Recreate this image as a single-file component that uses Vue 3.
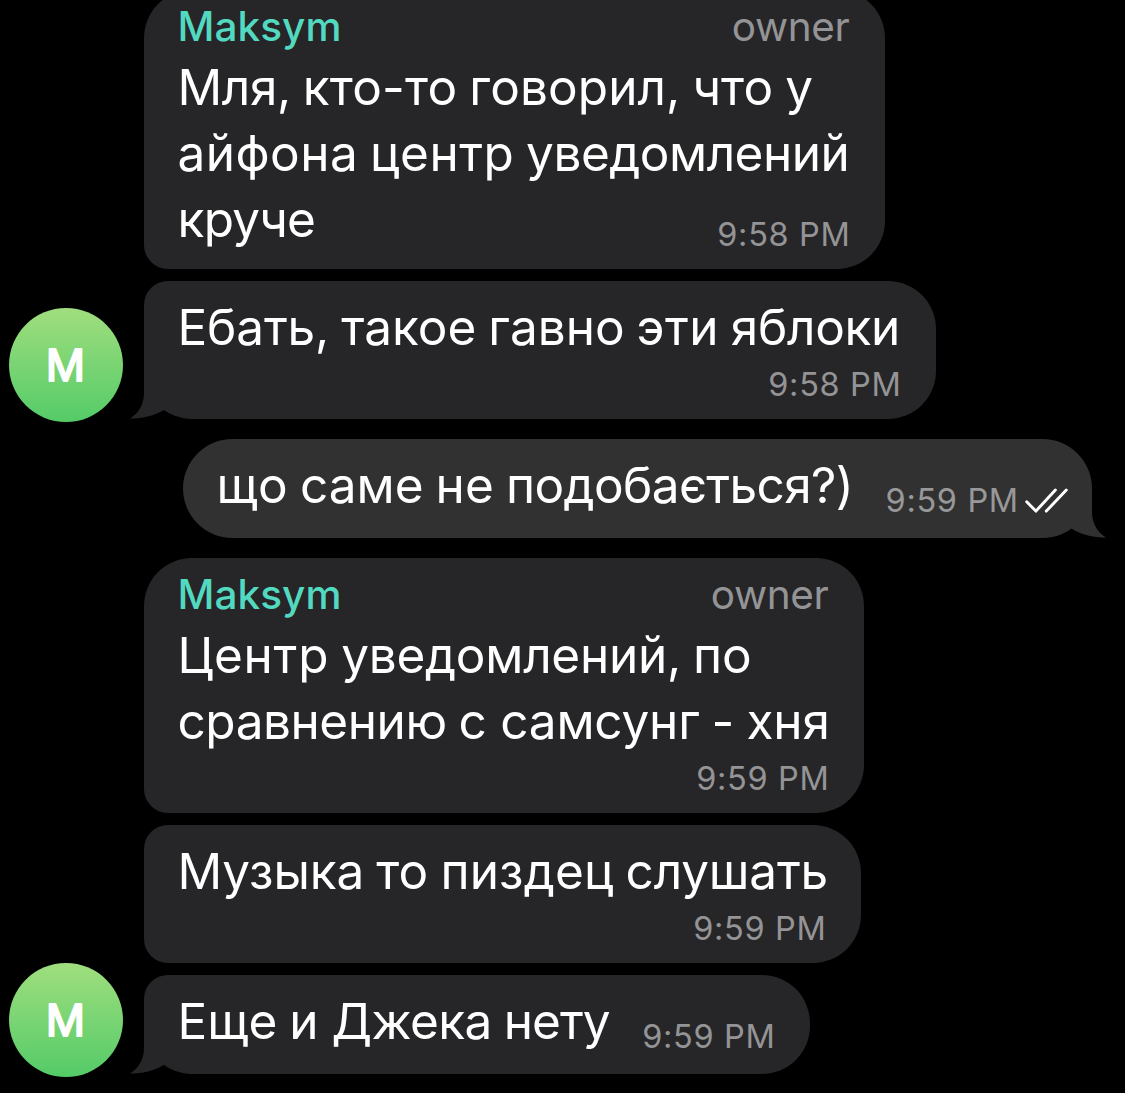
<script setup>
// Each word carries its own tracking in px.
const groups = [
  {
    own: false,
    messages: [
      {
        width: 741,
        author: 'Maksym',
        role: 'owner',
        time: '9:58 PM',
        inlineTime: true,
        lines: [
          [['Мля,', -0.4], ['кто-то', 0.2], ['говорил,', 0.1], ['что', 0.1], ['у', 0]],
          [['айфона', 0.45], ['центр', 0.45], ['уведомлений', -0.5]],
          [['круче', -0.7]],
        ],
      },
      {
        width: 792,
        time: '9:58 PM',
        tail: true,
        lines: [[['Ебать,', -0.15], ['такое', 0.02], ['гавно', 0.02], ['эти', 0.4], ['яблоки', -0.3]]],
      },
    ],
  },
  {
    own: true,
    messages: [
      {
        width: 909,
        time: '9:59 PM',
        inlineTime: true,
        tail: true,
        lines: [[['що', 0.5], ['саме', 0], ['не', 0.15], ['подобається?)', -0.6]]],
      },
    ],
  },
  {
    own: false,
    messages: [
      {
        width: 720,
        author: 'Maksym',
        role: 'owner',
        time: '9:59 PM',
        lines: [
          [['Центр', 0.75], ['уведомлений,', -0.25], ['по', 0]],
          [['сравнению', -0.45], ['с', 1.5], ['самсунг', -0.2], ['-', 0.2], ['хня', -0.1]],
        ],
      },
      {
        width: 717,
        time: '9:59 PM',
        lines: [[['Музыка', -0.1], ['то', 0.2], ['пиздец', 0.15], ['слушать', -0.2]]],
      },
      {
        width: 666,
        time: '9:59 PM',
        inlineTime: true,
        tail: true,
        lines: [[['Еще', 0.1], ['и', 0.9], ['Джека', -0.5], ['нету', -1]]],
      },
    ],
  },
]
</script>

<template>
  <main class="chat">
    <section v-for="(group, g) in groups" :key="g" class="group" :class="{ own: group.own }">
      <div v-if="!group.own" class="gutter">
        <svg class="avatar" viewBox="0 0 114 114">
          <defs>
            <linearGradient :id="'avatar-' + g" x1="0" y1="0" x2="0" y2="1">
              <stop offset="0" stop-color="#a0de7e" />
              <stop offset="1" stop-color="#54cb68" />
            </linearGradient>
          </defs>
          <circle cx="57" cy="57" r="57" :fill="`url(#avatar-${g})`" />
          <text x="56.3" y="73" text-anchor="middle" class="initial">M</text>
        </svg>
      </div>
      <div class="stack">
        <article
          v-for="(m, i) in group.messages"
          :key="i"
          class="bubble"
          :class="{ titled: m.author, tailed: m.tail, inline: m.inlineTime }"
          :style="{ width: m.width + 'px' }"
        >
          <svg v-if="m.tail" class="tail" viewBox="0 0 62 50">
            <path d="M14 0V24C14 35 9 44 0 49.4C13 50 25 46.500 34.500 40.500L40 20L30 0Z" />
          </svg>
          <header v-if="m.author" class="head">
            <span class="author">{{ m.author }}</span>
            <span class="role">{{ m.role }}</span>
          </header>
          <div class="body">
            <div class="text">
              <div v-for="(line, l) in m.lines" :key="l" class="line">
                <template v-for="([word, tracking], w) in line" :key="w">{{ w ? ' ' : '' }}<span :style="{ letterSpacing: tracking + 'px' }">{{ word }}</span></template>
              </div>
            </div>
            <div class="meta">
              <span class="time">{{ m.time }}</span>
              <svg v-if="group.own" class="checks" viewBox="0 0 44 26">
                <path d="M2.700 13.700 11.900 23.100 31.400 2M22.300 23.100 42.300 2" />
              </svg>
            </div>
          </div>
        </article>
      </div>
    </section>
  </main>
</template>

<style>
html,
body {
  background: #000;
}
</style>

<style scoped>
.chat {
  box-sizing: border-box;
  width: 1125px;
  height: 1093px;
  overflow: hidden;
  display: flex;
  flex-direction: column;
  justify-content: flex-end;
  gap: 20px;
  padding-bottom: 19px;
  background: #000;
  color: #fff;
  font-family: "Inter", "Liberation Sans", sans-serif;
}
.group {
  display: flex;
  align-items: flex-end;
  flex: none;
}
.group.own {
  justify-content: flex-end;
  padding-right: 33px;
}
.gutter {
  width: 135px;
  padding-left: 9px;
  flex: none;
  height: 114px;
  margin-bottom: -3px;
}
.avatar {
  display: block;
  width: 114px;
  height: 114px;
}
.initial {
  font-size: 43.5px;
  font-weight: 400;
  fill: #fff;
  stroke: #fff;
  stroke-width: 1.9px;
  stroke-linejoin: round;
}
.stack {
  display: flex;
  flex-direction: column;
  gap: 12px;
}
.bubble {
  --fill: #262628;
  box-sizing: border-box;
  position: relative;
  padding: 13px 34.5px 14px 33.5px;
  border-radius: 24px 48px 48px 24px;
  background: var(--fill);
}
.bubble.titled {
  padding-top: 0;
  border-top-left-radius: 48px;
}
.bubble.tailed {
  border-bottom-left-radius: 48px;
}
.bubble.inline {
  padding-bottom: 20px;
}
.bubble.titled.inline {
  padding-bottom: 17px;
}
.own .bubble {
  --fill: #313131;
  padding-right: 24.5px;
  border-radius: 49.5px;
}
.head {
  display: flex;
  justify-content: space-between;
  height: 64px;
  line-height: 73px;
  font-size: 40.5px;
}
.author {
  color: #52d9c0;
  font-weight: 500;
  letter-spacing: 0.05px;
}
.role {
  color: #949496;
  letter-spacing: -0.35px;
  margin-right: 1px;
}
.body {
  position: relative;
}
.line {
  height: 66px;
  line-height: 66px;
  font-size: 49.5px;
  word-spacing: -2px;
  white-space: nowrap;
}
.meta {
  display: flex;
  justify-content: flex-end;
  height: 45px;
  line-height: 50px;
  font-size: 32.5px;
  letter-spacing: 0.65px;
  color: #949496;
  white-space: nowrap;
}
.inline .body {
  display: flex;
  justify-content: space-between;
  align-items: flex-end;
}
.inline .text {
  width: 0;
}
.inline .meta {
  margin-bottom: -3px;
}
.own .meta {
  color: #98989a;
}
.checks {
  flex: none;
  width: 44px;
  height: 26px;
  margin: 11.500px 0 0 4.700px;
  fill: none;
  stroke: #fff;
  stroke-width: 2.9;
  stroke-linecap: round;
  stroke-linejoin: round;
}
.tail {
  position: absolute;
  left: -14px;
  bottom: 0;
  width: 62px;
  height: 50px;
  fill: var(--fill);
}
.own .tail {
  left: auto;
  right: -14px;
  transform: scaleX(-1);
}
</style>
